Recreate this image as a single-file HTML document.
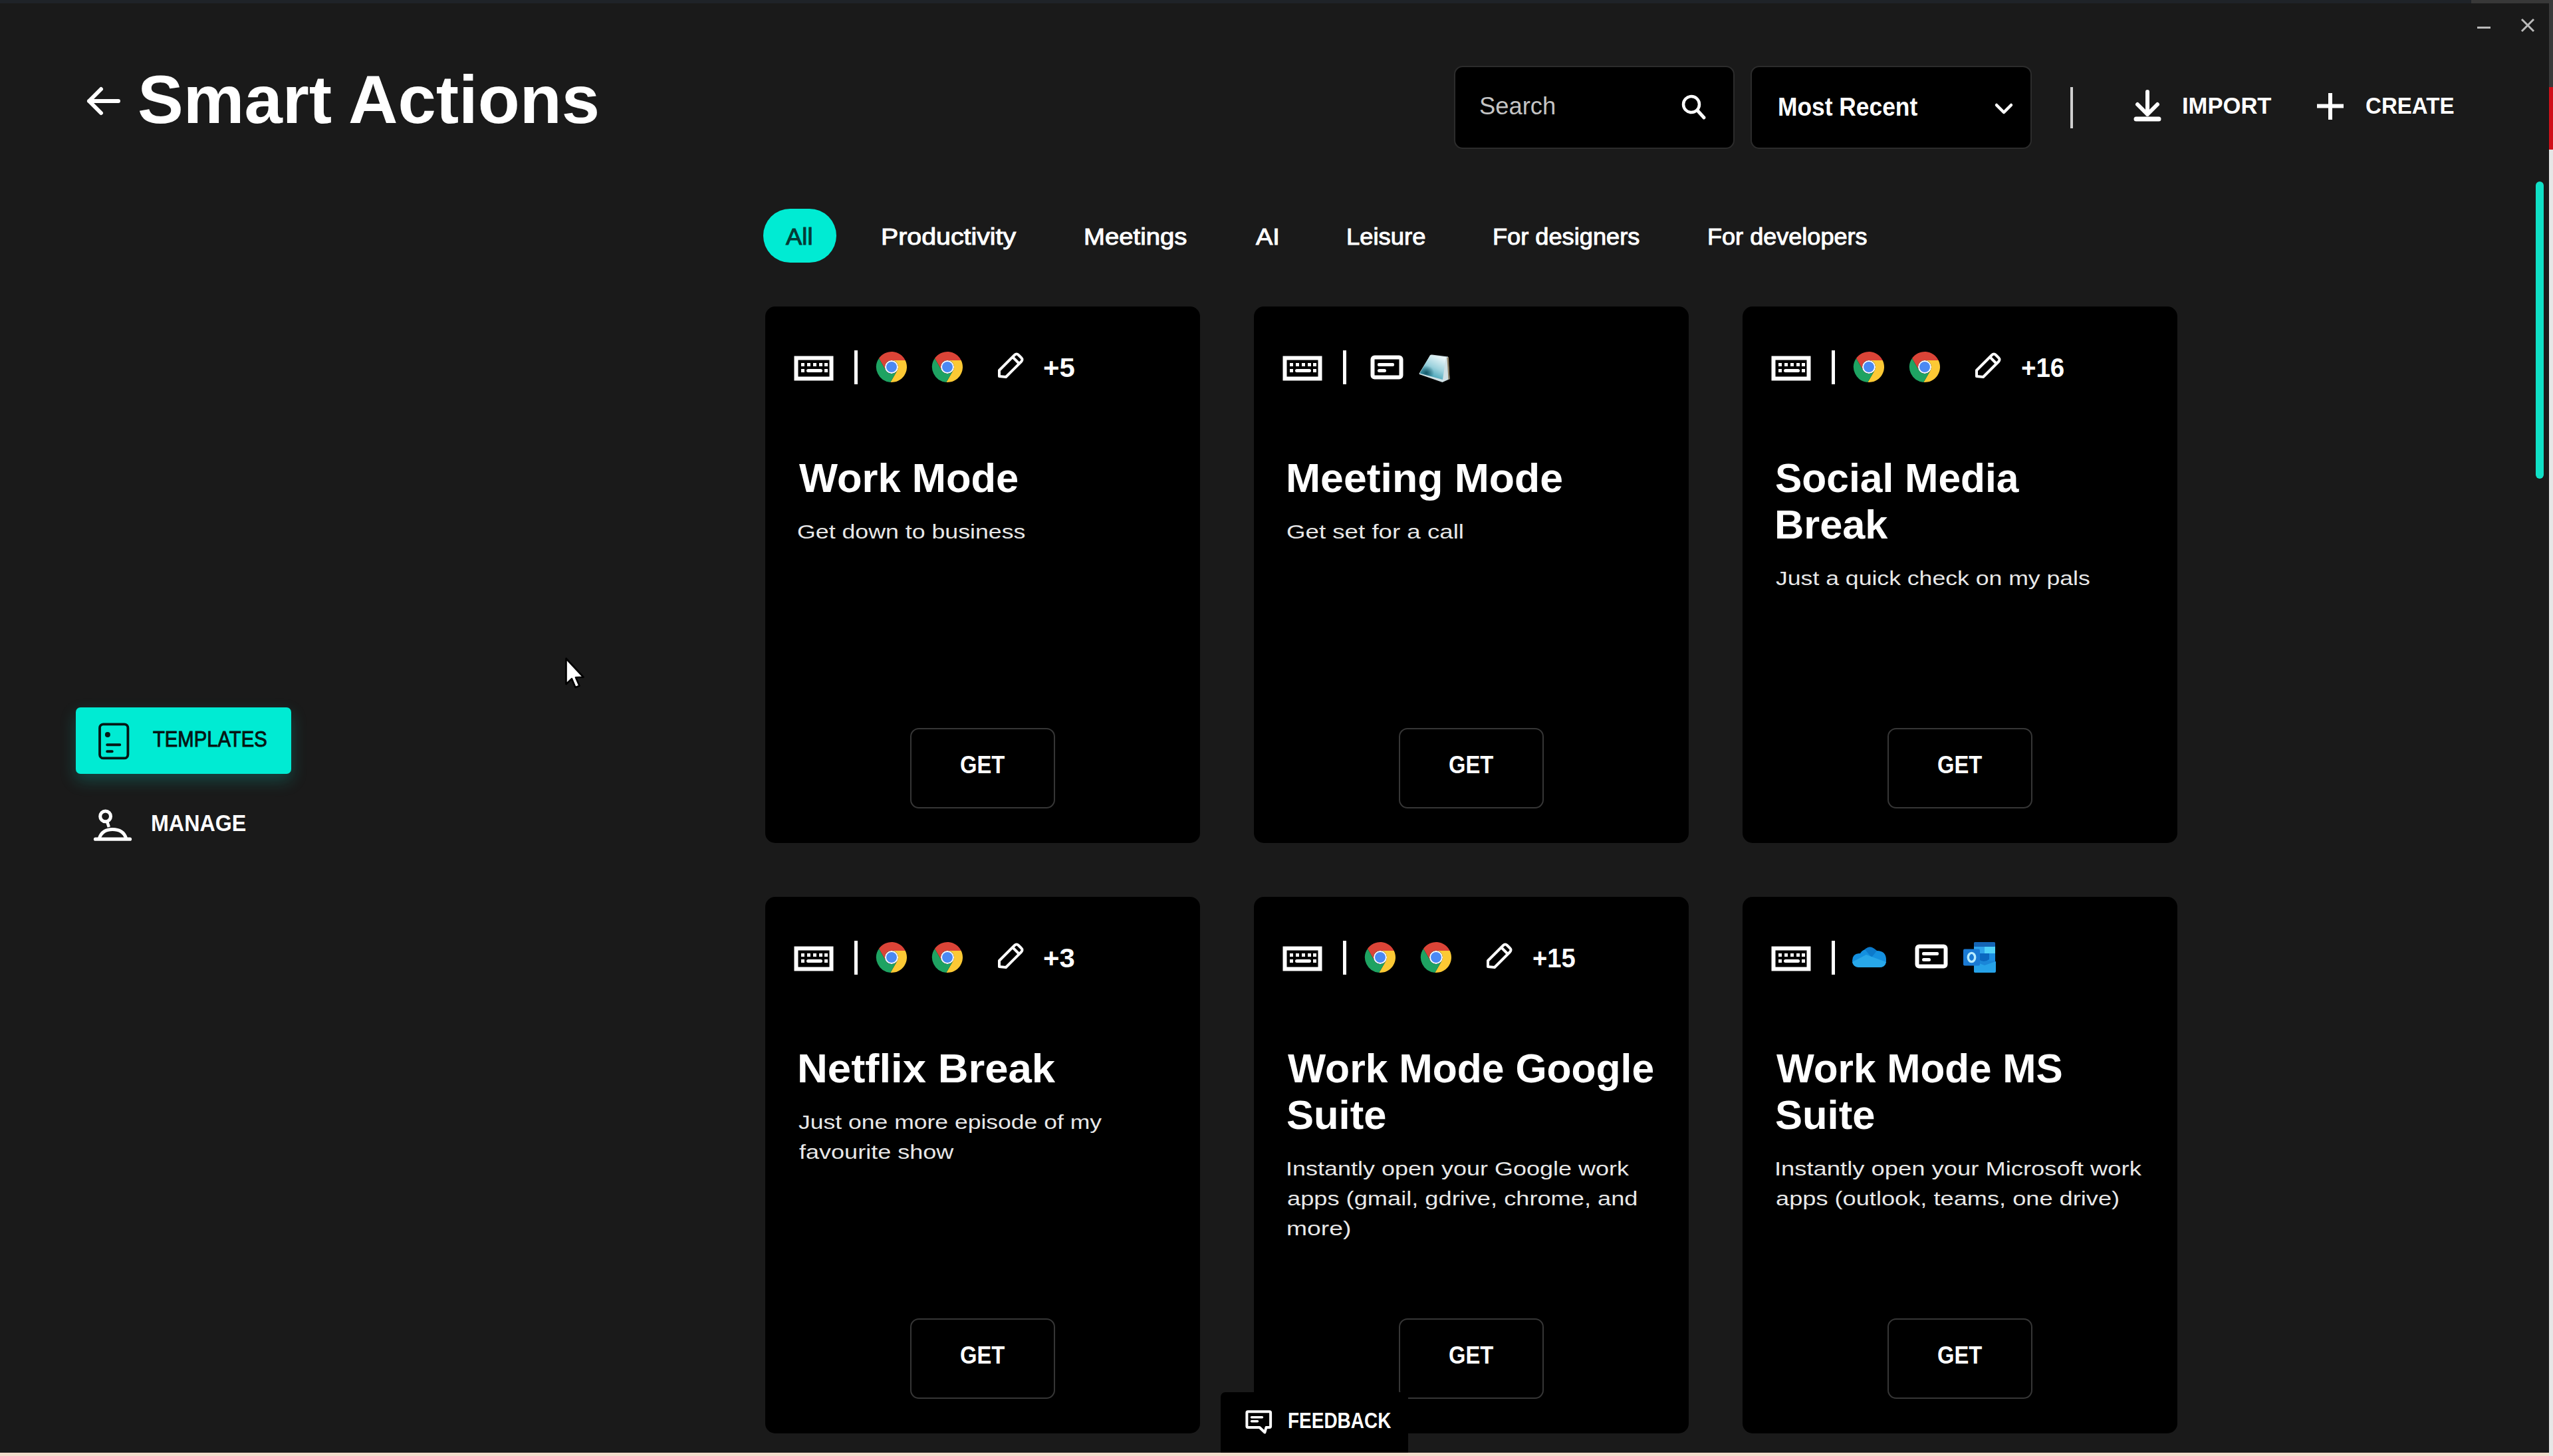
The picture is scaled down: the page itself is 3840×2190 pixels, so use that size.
<!DOCTYPE html>
<html><head><meta charset="utf-8">
<style>
html,body{margin:0;padding:0;}
body{width:3840px;height:2190px;background:#1a1a1a;position:relative;overflow:hidden;font-family:"Liberation Sans",sans-serif;}
.t{position:absolute;white-space:nowrap;line-height:1;}
.ab{position:absolute;display:block;}
.card{position:absolute;width:654px;height:807px;background:#000;border-radius:15px;}
.get{position:absolute;width:214px;height:117px;border:2px solid #363636;border-radius:13px;box-sizing:content-box;}

</style></head>
<body>
<div class="ab" style="left:0;top:0;width:3840px;height:5px;background:#1f2328"></div>
<div class="ab" style="left:3717px;top:0;width:117px;height:5px;background:#383838"></div>
<div class="ab" style="left:3834px;top:0;width:6px;height:2190px;background:#e6e6e6"></div>
<div class="ab" style="left:3834px;top:0;width:6px;height:131px;background:#3a3a3a"></div>
<div class="ab" style="left:3834px;top:131px;width:6px;height:94px;background:#d0101a"></div>
<div class="ab" style="left:0;top:2185px;width:3834px;height:5px;background:#f2dccb"></div>

<!-- window controls -->
<div class="ab" style="left:3726px;top:40px;width:20px;height:3px;background:#bbb"></div>
<svg class="ab" style="left:3791px;top:27px" width="22" height="22" viewBox="0 0 22 22"><path d="M2 2 L20 20 M20 2 L2 20" stroke="#bbb" stroke-width="3"/></svg>

<!-- header title -->
<svg class="ab" style="left:128px;top:128px" width="56" height="48" viewBox="0 0 56 48"><path d="M50 24 L6 24 M24 6 L6 24 L24 42" fill="none" stroke="#fff" stroke-width="6" stroke-linecap="round" stroke-linejoin="round"/></svg>
<div class="t " style="left:206.7px;top:98.7px;font-size:102.5px;font-weight:700;color:#fff;transform:scaleX(1.0057);transform-origin:0 0;">Smart Actions</div>

<!-- search -->
<div class="ab" style="left:2187px;top:99px;width:418px;height:121px;border:2px solid #2c2c2c;border-radius:13px;background:#000"></div>
<div class="t " style="left:2225.0px;top:141.4px;font-size:37px;font-weight:400;color:#c4c4c4;transform:scaleX(0.9823);transform-origin:0 0;">Search</div>
<svg class="ab" style="left:2527px;top:140px" width="40" height="42" viewBox="0 0 40 42"><circle cx="17" cy="17" r="12" fill="none" stroke="#fff" stroke-width="4.5"/><path d="M26 26 L36 37" stroke="#fff" stroke-width="5" stroke-linecap="round"/></svg>

<!-- sort dropdown -->
<div class="ab" style="left:2633px;top:99px;width:419px;height:121px;border:2px solid #2c2c2c;border-radius:13px;background:#000"></div>
<div class="t " style="left:2673.6px;top:141.5px;font-size:38px;font-weight:700;color:#fff;transform:scaleX(0.9305);transform-origin:0 0;">Most Recent</div>
<svg class="ab" style="left:2999px;top:153px" width="30" height="22" viewBox="0 0 30 22"><path d="M4 5 L15 16 L26 5" fill="none" stroke="#fff" stroke-width="4.5" stroke-linecap="round" stroke-linejoin="round"/></svg>

<div class="ab" style="left:3114px;top:131px;width:4px;height:62px;background:#cfcfcf"></div>

<!-- import -->
<svg class="ab" style="left:3208px;top:134px" width="44" height="50" viewBox="0 0 44 50"><path d="M22 4 L22 38 M7 23 L22 38 L37 23" fill="none" stroke="#fff" stroke-width="6" stroke-linecap="round" stroke-linejoin="round"/><path d="M5 45 L39 45" stroke="#fff" stroke-width="7" stroke-linecap="round"/></svg>
<div class="t " style="left:3282.1px;top:142.4px;font-size:35.5px;font-weight:700;color:#fff;transform:scaleX(0.9743);transform-origin:0 0;">IMPORT</div>
<svg class="ab" style="left:3483px;top:138px" width="44" height="44" viewBox="0 0 44 44"><path d="M22 2 L22 42 M2 21.5 L42 21.5" stroke="#fff" stroke-width="6"/></svg>
<div class="t " style="left:3557.8px;top:142.4px;font-size:35.5px;font-weight:700;color:#fff;transform:scaleX(0.9317);transform-origin:0 0;">CREATE</div>

<!-- scrollbar -->
<div class="ab" style="left:3814px;top:273px;width:12px;height:447px;background:#10e0c6;border-radius:6px"></div>

<!-- categories -->
<div class="ab" style="left:1148px;top:314px;width:110px;height:81px;background:#00ebd3;border-radius:41px"></div>
<div class="t cat" style="left:1182.0px;top:337.8px;font-size:35px;font-weight:400;color:#053a34;transform:scaleX(1.0405);transform-origin:0 0;-webkit-text-stroke:1.0px #053a34;">All</div>
<div class="t cat" style="left:1325.4px;top:337.8px;font-size:35px;font-weight:400;color:#fff;transform:scaleX(1.1232);transform-origin:0 0;-webkit-text-stroke:1.0px #fff;">Productivity</div>
<div class="t cat" style="left:1629.7px;top:337.8px;font-size:35px;font-weight:400;color:#fff;transform:scaleX(1.0942);transform-origin:0 0;-webkit-text-stroke:1.0px #fff;">Meetings</div>
<div class="t cat" style="left:1889.0px;top:337.8px;font-size:35px;font-weight:400;color:#fff;transform:scaleX(1.0833);transform-origin:0 0;-webkit-text-stroke:1.0px #fff;">AI</div>
<div class="t cat" style="left:2024.5px;top:337.8px;font-size:35px;font-weight:400;color:#fff;transform:scaleX(1.04);transform-origin:0 0;-webkit-text-stroke:1.0px #fff;">Leisure</div>
<div class="t cat" style="left:2244.7px;top:337.8px;font-size:35px;font-weight:400;color:#fff;transform:scaleX(1.0343);transform-origin:0 0;-webkit-text-stroke:1.0px #fff;">For designers</div>
<div class="t cat" style="left:2567.9px;top:337.8px;font-size:35px;font-weight:400;color:#fff;transform:scaleX(1.0306);transform-origin:0 0;-webkit-text-stroke:1.0px #fff;">For developers</div>

<!-- left nav -->
<div class="ab" style="left:114px;top:1064px;width:324px;height:100px;background:#00ebd3;border-radius:7px;box-shadow:0 10px 24px rgba(0,230,208,0.22)"></div>
<svg class="ab" style="left:146px;top:1086px" width="50" height="59" viewBox="0 0 50 59"><rect x="4" y="3.3" width="42.4" height="51.1" rx="5.5" fill="none" stroke="#061614" stroke-width="3.8"/><circle cx="15.9" cy="18.9" r="4" fill="#061614"/><path d="M15.2 34.3 L34.2 34.3 M15.2 44.2 L22.7 44.2" stroke="#061614" stroke-width="4" stroke-linecap="round"/></svg>
<div class="t " style="left:230.1px;top:1095.8px;font-size:32.7px;font-weight:400;color:#061614;transform:scaleX(0.8947);transform-origin:0 0;-webkit-text-stroke:1.0px #061614;">TEMPLATES</div>
<svg class="ab" style="left:139px;top:1217px" width="62" height="50" viewBox="0 0 62 50"><circle cx="19.6" cy="10.9" r="7.9" fill="none" stroke="#fff" stroke-width="5"/><path d="M22 18.5 L24.8 27" stroke="#fff" stroke-width="4.5"/><path d="M10.5 43.5 C13.5 34.5 20 30.5 30.2 30.5 C40.5 30.5 47.5 34.5 50.5 43.5" fill="none" stroke="#fff" stroke-width="5"/><path d="M4.5 45.2 L56.5 45.2" stroke="#fff" stroke-width="5.2" stroke-linecap="round"/></svg>
<div class="t " style="left:227.2px;top:1220.4px;font-size:35px;font-weight:700;color:#fff;transform:scaleX(0.9211);transform-origin:0 0;">MANAGE</div>

<!-- cursor -->
<svg class="ab" style="left:846px;top:986px" width="38" height="54" viewBox="0 0 38 54"><path d="M5.5 4.5 L5.5 43 L14 35 L19.5 48 L25.5 45.5 L20 33 L31.5 32.5 Z" fill="#fff" stroke="#000" stroke-width="2.6" stroke-linejoin="round"/></svg>

<div class="card" style="left:1151px;top:461px"></div>
<svg class="ab" style="left:1194px;top:535px" width="60" height="38" viewBox="0 0 60 38">
<rect x="3.5" y="3.5" width="53" height="31" fill="none" stroke="#fff" stroke-width="6"/>
<rect x="11" y="11" width="5" height="5" fill="#fff"/><rect x="20" y="11" width="5" height="5" fill="#fff"/>
<rect x="29" y="11" width="5" height="5" fill="#fff"/><rect x="38" y="11" width="5" height="5" fill="#fff"/>
<rect x="46" y="11" width="5" height="5" fill="#fff"/>
<rect x="11" y="20" width="5" height="5" fill="#fff"/><rect x="19" y="20" width="24" height="5" rx="2.5" fill="#fff"/>
<rect x="46" y="20" width="5" height="5" fill="#fff"/>
</svg>
<div class="ab" style="left:1285px;top:527px;width:5px;height:51px;background:#fff"></div>
<svg class="ab" style="left:1317px;top:528px" width="48" height="48" viewBox="0 0 48 48">
<path d="M24 14 L44.7 14 A23 23 0 0 0 4.98 11.06 L15.34 29 A10 10 0 0 1 24 14 Z" fill="#db4437"/>
<path d="M44.7 14 L24 14 A10 10 0 0 1 32.66 29 L22.3 46.94 A23 23 0 0 0 44.7 14 Z" fill="#fcc934"/>
<path d="M22.3 46.94 L32.66 29 A10 10 0 0 1 15.34 29 L4.98 11.06 A23 23 0 0 0 22.3 46.94 Z" fill="#1ea362"/>
<circle cx="24" cy="24" r="10" fill="#fff"/>
<circle cx="24" cy="24" r="8" fill="#4a89f3"/>
</svg>
<svg class="ab" style="left:1401px;top:528px" width="48" height="48" viewBox="0 0 48 48">
<path d="M24 14 L44.7 14 A23 23 0 0 0 4.98 11.06 L15.34 29 A10 10 0 0 1 24 14 Z" fill="#db4437"/>
<path d="M44.7 14 L24 14 A10 10 0 0 1 32.66 29 L22.3 46.94 A23 23 0 0 0 44.7 14 Z" fill="#fcc934"/>
<path d="M22.3 46.94 L32.66 29 A10 10 0 0 1 15.34 29 L4.98 11.06 A23 23 0 0 0 22.3 46.94 Z" fill="#1ea362"/>
<circle cx="24" cy="24" r="10" fill="#fff"/>
<circle cx="24" cy="24" r="8" fill="#4a89f3"/>
</svg>
<svg class="ab" style="left:1498px;top:528px" width="44" height="42" viewBox="0 0 44 42">
<path d="M5 38 L5 29 L28 6 Q31 3 34 6 L38 10 Q41 13 38 16 L15 39 Z" fill="none" stroke="#fff" stroke-width="4" stroke-linejoin="round"/>
<path d="M25 9 L35 19" stroke="#fff" stroke-width="4"/>
</svg>
<div class="t " style="left:1569.4px;top:532.7px;font-size:40px;font-weight:700;color:#fff;transform:scaleX(1.0476);transform-origin:0 0;">+5</div>
<div class="t ttl" style="left:1202.0px;top:687.9px;font-size:61.5px;font-weight:700;color:#fff;">Work Mode</div>
<div class="t sub" style="left:1198.8px;top:784.6px;font-size:30px;font-weight:400;color:#e8e8e8;transform:scaleX(1.1902);transform-origin:0 0;">Get down to business</div>
<div class="get" style="left:1369px;top:1095px"></div>
<div class="t " style="left:1444.1px;top:1132.1px;font-size:37px;font-weight:700;color:#fff;transform:scaleX(0.8851);transform-origin:0 0;">GET</div>
<div class="card" style="left:1886px;top:461px"></div>
<svg class="ab" style="left:1929px;top:535px" width="60" height="38" viewBox="0 0 60 38">
<rect x="3.5" y="3.5" width="53" height="31" fill="none" stroke="#fff" stroke-width="6"/>
<rect x="11" y="11" width="5" height="5" fill="#fff"/><rect x="20" y="11" width="5" height="5" fill="#fff"/>
<rect x="29" y="11" width="5" height="5" fill="#fff"/><rect x="38" y="11" width="5" height="5" fill="#fff"/>
<rect x="46" y="11" width="5" height="5" fill="#fff"/>
<rect x="11" y="20" width="5" height="5" fill="#fff"/><rect x="19" y="20" width="24" height="5" rx="2.5" fill="#fff"/>
<rect x="46" y="20" width="5" height="5" fill="#fff"/>
</svg>
<div class="ab" style="left:2020px;top:527px;width:5px;height:51px;background:#fff"></div>
<svg class="ab" style="left:2061px;top:534px" width="50" height="37" viewBox="0 0 50 37">
<rect x="3.5" y="3.5" width="43" height="30" rx="3" fill="none" stroke="#fff" stroke-width="6"/>
<rect x="11" y="12" width="25" height="5" rx="2" fill="#fff"/>
<rect x="11" y="21" width="13" height="5" rx="2.5" fill="#fff"/>
</svg>
<svg class="ab" style="left:2134px;top:533px" width="48" height="44" viewBox="0 0 48 44">
<defs><linearGradient id="np2134533" x1="0.75" y1="0" x2="0.2" y2="1"><stop offset="0" stop-color="#eef8fa"/><stop offset="0.45" stop-color="#9fd3de"/><stop offset="0.8" stop-color="#4aa6ba"/><stop offset="1" stop-color="#2a8298"/></linearGradient>
<radialGradient id="nr2134533" cx="0.25" cy="0.72" r="0.3"><stop offset="0" stop-color="#0e4e5e" stop-opacity="0.9"/><stop offset="1" stop-color="#0e4e5e" stop-opacity="0"/></radialGradient></defs>
<path d="M17 1.5 Q18 0 20 0.5 L44 3.5 L46.5 37 L35.5 42 L1 30 Q0 29 1 28 Z" fill="#cfe0e4"/>
<path d="M45 4 L46.5 37 L44.5 38 L42.5 5 Z" fill="#8a7c60"/>
<path d="M17 1.5 L41 4.5 L36 38 L1.5 28.5 Z" fill="url(#np2134533)"/>
<path d="M17 1.5 L41 4.5 L36 38 L1.5 28.5 Z" fill="url(#nr2134533)"/>
</svg>
<div class="t ttl" style="left:1934.4px;top:687.9px;font-size:61.5px;font-weight:700;color:#fff;transform:scaleX(1.0173);transform-origin:0 0;">Meeting Mode</div>
<div class="t sub" style="left:1934.8px;top:784.6px;font-size:30px;font-weight:400;color:#e8e8e8;transform:scaleX(1.2222);transform-origin:0 0;">Get set for a call</div>
<div class="get" style="left:2104px;top:1095px"></div>
<div class="t " style="left:2179.1px;top:1132.1px;font-size:37px;font-weight:700;color:#fff;transform:scaleX(0.8851);transform-origin:0 0;">GET</div>
<div class="card" style="left:2621px;top:461px"></div>
<svg class="ab" style="left:2664px;top:535px" width="60" height="38" viewBox="0 0 60 38">
<rect x="3.5" y="3.5" width="53" height="31" fill="none" stroke="#fff" stroke-width="6"/>
<rect x="11" y="11" width="5" height="5" fill="#fff"/><rect x="20" y="11" width="5" height="5" fill="#fff"/>
<rect x="29" y="11" width="5" height="5" fill="#fff"/><rect x="38" y="11" width="5" height="5" fill="#fff"/>
<rect x="46" y="11" width="5" height="5" fill="#fff"/>
<rect x="11" y="20" width="5" height="5" fill="#fff"/><rect x="19" y="20" width="24" height="5" rx="2.5" fill="#fff"/>
<rect x="46" y="20" width="5" height="5" fill="#fff"/>
</svg>
<div class="ab" style="left:2755px;top:527px;width:5px;height:51px;background:#fff"></div>
<svg class="ab" style="left:2787px;top:528px" width="48" height="48" viewBox="0 0 48 48">
<path d="M24 14 L44.7 14 A23 23 0 0 0 4.98 11.06 L15.34 29 A10 10 0 0 1 24 14 Z" fill="#db4437"/>
<path d="M44.7 14 L24 14 A10 10 0 0 1 32.66 29 L22.3 46.94 A23 23 0 0 0 44.7 14 Z" fill="#fcc934"/>
<path d="M22.3 46.94 L32.66 29 A10 10 0 0 1 15.34 29 L4.98 11.06 A23 23 0 0 0 22.3 46.94 Z" fill="#1ea362"/>
<circle cx="24" cy="24" r="10" fill="#fff"/>
<circle cx="24" cy="24" r="8" fill="#4a89f3"/>
</svg>
<svg class="ab" style="left:2871px;top:528px" width="48" height="48" viewBox="0 0 48 48">
<path d="M24 14 L44.7 14 A23 23 0 0 0 4.98 11.06 L15.34 29 A10 10 0 0 1 24 14 Z" fill="#db4437"/>
<path d="M44.7 14 L24 14 A10 10 0 0 1 32.66 29 L22.3 46.94 A23 23 0 0 0 44.7 14 Z" fill="#fcc934"/>
<path d="M22.3 46.94 L32.66 29 A10 10 0 0 1 15.34 29 L4.98 11.06 A23 23 0 0 0 22.3 46.94 Z" fill="#1ea362"/>
<circle cx="24" cy="24" r="10" fill="#fff"/>
<circle cx="24" cy="24" r="8" fill="#4a89f3"/>
</svg>
<svg class="ab" style="left:2968px;top:528px" width="44" height="42" viewBox="0 0 44 42">
<path d="M5 38 L5 29 L28 6 Q31 3 34 6 L38 10 Q41 13 38 16 L15 39 Z" fill="none" stroke="#fff" stroke-width="4" stroke-linejoin="round"/>
<path d="M25 9 L35 19" stroke="#fff" stroke-width="4"/>
</svg>
<div class="t " style="left:3039.6px;top:532.7px;font-size:40px;font-weight:700;color:#fff;transform:scaleX(0.9615);transform-origin:0 0;">+16</div>
<div class="t ttl" style="left:2670.0px;top:687.9px;font-size:61.5px;font-weight:700;color:#fff;transform:scaleX(0.9838);transform-origin:0 0;">Social Media</div>
<div class="t ttl" style="left:2669.0px;top:757.9px;font-size:61.5px;font-weight:700;color:#fff;transform:scaleX(0.997);transform-origin:0 0;">Break</div>
<div class="t sub" style="left:2670.8px;top:854.6px;font-size:30px;font-weight:400;color:#e8e8e8;transform:scaleX(1.1864);transform-origin:0 0;">Just a quick check on my pals</div>
<div class="get" style="left:2839px;top:1095px"></div>
<div class="t " style="left:2914.1px;top:1132.1px;font-size:37px;font-weight:700;color:#fff;transform:scaleX(0.8851);transform-origin:0 0;">GET</div>
<div class="card" style="left:1151px;top:1349px"></div>
<svg class="ab" style="left:1194px;top:1423px" width="60" height="38" viewBox="0 0 60 38">
<rect x="3.5" y="3.5" width="53" height="31" fill="none" stroke="#fff" stroke-width="6"/>
<rect x="11" y="11" width="5" height="5" fill="#fff"/><rect x="20" y="11" width="5" height="5" fill="#fff"/>
<rect x="29" y="11" width="5" height="5" fill="#fff"/><rect x="38" y="11" width="5" height="5" fill="#fff"/>
<rect x="46" y="11" width="5" height="5" fill="#fff"/>
<rect x="11" y="20" width="5" height="5" fill="#fff"/><rect x="19" y="20" width="24" height="5" rx="2.5" fill="#fff"/>
<rect x="46" y="20" width="5" height="5" fill="#fff"/>
</svg>
<div class="ab" style="left:1285px;top:1415px;width:5px;height:51px;background:#fff"></div>
<svg class="ab" style="left:1317px;top:1416px" width="48" height="48" viewBox="0 0 48 48">
<path d="M24 14 L44.7 14 A23 23 0 0 0 4.98 11.06 L15.34 29 A10 10 0 0 1 24 14 Z" fill="#db4437"/>
<path d="M44.7 14 L24 14 A10 10 0 0 1 32.66 29 L22.3 46.94 A23 23 0 0 0 44.7 14 Z" fill="#fcc934"/>
<path d="M22.3 46.94 L32.66 29 A10 10 0 0 1 15.34 29 L4.98 11.06 A23 23 0 0 0 22.3 46.94 Z" fill="#1ea362"/>
<circle cx="24" cy="24" r="10" fill="#fff"/>
<circle cx="24" cy="24" r="8" fill="#4a89f3"/>
</svg>
<svg class="ab" style="left:1401px;top:1416px" width="48" height="48" viewBox="0 0 48 48">
<path d="M24 14 L44.7 14 A23 23 0 0 0 4.98 11.06 L15.34 29 A10 10 0 0 1 24 14 Z" fill="#db4437"/>
<path d="M44.7 14 L24 14 A10 10 0 0 1 32.66 29 L22.3 46.94 A23 23 0 0 0 44.7 14 Z" fill="#fcc934"/>
<path d="M22.3 46.94 L32.66 29 A10 10 0 0 1 15.34 29 L4.98 11.06 A23 23 0 0 0 22.3 46.94 Z" fill="#1ea362"/>
<circle cx="24" cy="24" r="10" fill="#fff"/>
<circle cx="24" cy="24" r="8" fill="#4a89f3"/>
</svg>
<svg class="ab" style="left:1498px;top:1416px" width="44" height="42" viewBox="0 0 44 42">
<path d="M5 38 L5 29 L28 6 Q31 3 34 6 L38 10 Q41 13 38 16 L15 39 Z" fill="none" stroke="#fff" stroke-width="4" stroke-linejoin="round"/>
<path d="M25 9 L35 19" stroke="#fff" stroke-width="4"/>
</svg>
<div class="t " style="left:1569.4px;top:1420.7px;font-size:40px;font-weight:700;color:#fff;transform:scaleX(1.0476);transform-origin:0 0;">+3</div>
<div class="t ttl" style="left:1199.4px;top:1575.9px;font-size:61.5px;font-weight:700;color:#fff;transform:scaleX(1.0323);transform-origin:0 0;">Netflix Break</div>
<div class="t sub" style="left:1200.8px;top:1672.6px;font-size:30px;font-weight:400;color:#e8e8e8;transform:scaleX(1.1839);transform-origin:0 0;">Just one more episode of my</div>
<div class="t sub" style="left:1202.0px;top:1717.6px;font-size:30px;font-weight:400;color:#e8e8e8;transform:scaleX(1.201);transform-origin:0 0;">favourite show</div>
<div class="get" style="left:1369px;top:1983px"></div>
<div class="t " style="left:1444.1px;top:2020.1px;font-size:37px;font-weight:700;color:#fff;transform:scaleX(0.8851);transform-origin:0 0;">GET</div>
<div class="card" style="left:1886px;top:1349px"></div>
<svg class="ab" style="left:1929px;top:1423px" width="60" height="38" viewBox="0 0 60 38">
<rect x="3.5" y="3.5" width="53" height="31" fill="none" stroke="#fff" stroke-width="6"/>
<rect x="11" y="11" width="5" height="5" fill="#fff"/><rect x="20" y="11" width="5" height="5" fill="#fff"/>
<rect x="29" y="11" width="5" height="5" fill="#fff"/><rect x="38" y="11" width="5" height="5" fill="#fff"/>
<rect x="46" y="11" width="5" height="5" fill="#fff"/>
<rect x="11" y="20" width="5" height="5" fill="#fff"/><rect x="19" y="20" width="24" height="5" rx="2.5" fill="#fff"/>
<rect x="46" y="20" width="5" height="5" fill="#fff"/>
</svg>
<div class="ab" style="left:2020px;top:1415px;width:5px;height:51px;background:#fff"></div>
<svg class="ab" style="left:2052px;top:1416px" width="48" height="48" viewBox="0 0 48 48">
<path d="M24 14 L44.7 14 A23 23 0 0 0 4.98 11.06 L15.34 29 A10 10 0 0 1 24 14 Z" fill="#db4437"/>
<path d="M44.7 14 L24 14 A10 10 0 0 1 32.66 29 L22.3 46.94 A23 23 0 0 0 44.7 14 Z" fill="#fcc934"/>
<path d="M22.3 46.94 L32.66 29 A10 10 0 0 1 15.34 29 L4.98 11.06 A23 23 0 0 0 22.3 46.94 Z" fill="#1ea362"/>
<circle cx="24" cy="24" r="10" fill="#fff"/>
<circle cx="24" cy="24" r="8" fill="#4a89f3"/>
</svg>
<svg class="ab" style="left:2136px;top:1416px" width="48" height="48" viewBox="0 0 48 48">
<path d="M24 14 L44.7 14 A23 23 0 0 0 4.98 11.06 L15.34 29 A10 10 0 0 1 24 14 Z" fill="#db4437"/>
<path d="M44.7 14 L24 14 A10 10 0 0 1 32.66 29 L22.3 46.94 A23 23 0 0 0 44.7 14 Z" fill="#fcc934"/>
<path d="M22.3 46.94 L32.66 29 A10 10 0 0 1 15.34 29 L4.98 11.06 A23 23 0 0 0 22.3 46.94 Z" fill="#1ea362"/>
<circle cx="24" cy="24" r="10" fill="#fff"/>
<circle cx="24" cy="24" r="8" fill="#4a89f3"/>
</svg>
<svg class="ab" style="left:2233px;top:1416px" width="44" height="42" viewBox="0 0 44 42">
<path d="M5 38 L5 29 L28 6 Q31 3 34 6 L38 10 Q41 13 38 16 L15 39 Z" fill="none" stroke="#fff" stroke-width="4" stroke-linejoin="round"/>
<path d="M25 9 L35 19" stroke="#fff" stroke-width="4"/>
</svg>
<div class="t " style="left:2304.6px;top:1420.7px;font-size:40px;font-weight:700;color:#fff;transform:scaleX(0.9538);transform-origin:0 0;">+15</div>
<div class="t ttl" style="left:1937.0px;top:1575.9px;font-size:61.5px;font-weight:700;color:#fff;transform:scaleX(0.9856);transform-origin:0 0;">Work Mode Google</div>
<div class="t ttl" style="left:1935.0px;top:1645.9px;font-size:61.5px;font-weight:700;color:#fff;">Suite</div>
<div class="t sub" style="left:1934.4px;top:1742.6px;font-size:30px;font-weight:400;color:#e8e8e8;transform:scaleX(1.1991);transform-origin:0 0;">Instantly open your Google work</div>
<div class="t sub" style="left:1935.8px;top:1787.6px;font-size:30px;font-weight:400;color:#e8e8e8;transform:scaleX(1.2074);transform-origin:0 0;">apps (gmail, gdrive, chrome, and</div>
<div class="t sub" style="left:1934.5px;top:1832.6px;font-size:30px;font-weight:400;color:#e8e8e8;transform:scaleX(1.2432);transform-origin:0 0;">more)</div>
<div class="get" style="left:2104px;top:1983px"></div>
<div class="t " style="left:2179.1px;top:2020.1px;font-size:37px;font-weight:700;color:#fff;transform:scaleX(0.8851);transform-origin:0 0;">GET</div>
<div class="card" style="left:2621px;top:1349px"></div>
<svg class="ab" style="left:2664px;top:1423px" width="60" height="38" viewBox="0 0 60 38">
<rect x="3.5" y="3.5" width="53" height="31" fill="none" stroke="#fff" stroke-width="6"/>
<rect x="11" y="11" width="5" height="5" fill="#fff"/><rect x="20" y="11" width="5" height="5" fill="#fff"/>
<rect x="29" y="11" width="5" height="5" fill="#fff"/><rect x="38" y="11" width="5" height="5" fill="#fff"/>
<rect x="46" y="11" width="5" height="5" fill="#fff"/>
<rect x="11" y="20" width="5" height="5" fill="#fff"/><rect x="19" y="20" width="24" height="5" rx="2.5" fill="#fff"/>
<rect x="46" y="20" width="5" height="5" fill="#fff"/>
</svg>
<div class="ab" style="left:2755px;top:1415px;width:5px;height:51px;background:#fff"></div>
<svg class="ab" style="left:2785px;top:1422px" width="53" height="34" viewBox="0 0 53 34">
<path d="M20 6 Q28 -2 38 8 Q52 8 52 22 Q52 33 42 33 L12 33 Q1 33 1 23 Q1 12 13 12 Q15 8 20 6 Z" fill="#1490df"/>
<path d="M20 6 Q28 -2 38 8 L30 18 Z" fill="#0364b8" opacity="0.5"/>
<path d="M1 25 L22 14 L52 25 Q50 33 42 33 L12 33 Q3 33 1 25 Z" fill="#28a8ea"/>
</svg>
<svg class="ab" style="left:2880px;top:1420px" width="50" height="37" viewBox="0 0 50 37">
<rect x="3.5" y="3.5" width="43" height="30" rx="3" fill="none" stroke="#fff" stroke-width="6"/>
<rect x="11" y="12" width="25" height="5" rx="2" fill="#fff"/>
<rect x="11" y="21" width="13" height="5" rx="2.5" fill="#fff"/>
</svg>
<svg class="ab" style="left:2952px;top:1416px" width="52" height="48" viewBox="0 0 52 48">
<rect x="17" y="1" width="32" height="46" rx="2.5" fill="#1a86d8"/>
<rect x="17" y="1" width="32" height="7" rx="2" fill="#1464b4"/>
<rect x="17" y="8" width="16" height="10" fill="#2ea4ec"/>
<rect x="33" y="8" width="16" height="10" fill="#50d2f8"/>
<rect x="17" y="18" width="32" height="11" fill="#1c8ee2"/>
<path d="M24 18 L40 18 L40 27 Q32 33 24 27 Z" fill="#0a68c0"/>
<path d="M17 30 L33 36 L50 30 L50 45 Q50 47 48 47 L19 47 Q17 47 17 45 Z" fill="#26a2e8"/>
<rect x="1" y="11.5" width="25" height="25" rx="2" fill="#1a7ad4"/>
<ellipse cx="13.5" cy="24" rx="5.2" ry="6.6" fill="none" stroke="#b8ecff" stroke-width="3.4"/>
</svg>
<div class="t ttl" style="left:2672.0px;top:1575.9px;font-size:61.5px;font-weight:700;color:#fff;transform:scaleX(0.9795);transform-origin:0 0;">Work Mode MS</div>
<div class="t ttl" style="left:2670.0px;top:1645.9px;font-size:61.5px;font-weight:700;color:#fff;">Suite</div>
<div class="t sub" style="left:2669.4px;top:1742.6px;font-size:30px;font-weight:400;color:#e8e8e8;transform:scaleX(1.2124);transform-origin:0 0;">Instantly open your Microsoft work</div>
<div class="t sub" style="left:2670.8px;top:1787.6px;font-size:30px;font-weight:400;color:#e8e8e8;transform:scaleX(1.2066);transform-origin:0 0;">apps (outlook, teams, one drive)</div>
<div class="get" style="left:2839px;top:1983px"></div>
<div class="t " style="left:2914.1px;top:2020.1px;font-size:37px;font-weight:700;color:#fff;transform:scaleX(0.8851);transform-origin:0 0;">GET</div>

<!-- feedback tab -->
<div class="ab" style="left:1836px;top:2094px;width:282px;height:91px;background:#000;border-radius:7px 0 0 0"></div>
<svg class="ab" style="left:1871px;top:2119px" width="44" height="40" viewBox="0 0 44 40"><path d="M6 4.3 L38.5 4.3 Q40.1 4.3 40.1 6 L40.1 26.3 Q40.1 28 38.5 28 L33.5 28 L31.4 35.5 L23.5 28 L6 28 Q4.4 28 4.4 26.3 L4.4 6 Q4.4 4.3 6 4.3 Z" fill="none" stroke="#fff" stroke-width="4" stroke-linejoin="round"/><path d="M11.5 12.8 L27.5 12.8 M11.5 18.8 L20.5 18.8" stroke="#fff" stroke-width="3.4" stroke-linecap="round"/></svg>
<div class="t " style="left:1937.4px;top:2119.2px;font-size:34px;font-weight:700;color:#fff;transform:scaleX(0.8226);transform-origin:0 0;">FEEDBACK</div>

</body></html>
